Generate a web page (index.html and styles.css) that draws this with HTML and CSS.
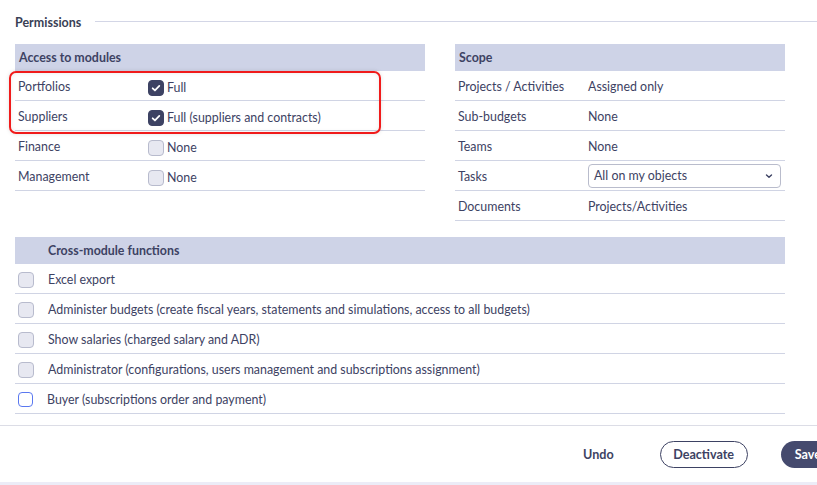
FILE: index.html
```html
<!DOCTYPE html>
<html>
<head>
<meta charset="utf-8">
<link rel="stylesheet" href="styles.css">
</head>
<body>
<div class="page">
  <div class="section-title"><span>Permissions</span><div class="rule"></div></div>
  <div class="top-grid">
    <div class="table modules">
      <div class="thead">Access to modules</div>
      <div class="row"><div class="label">Portfolios</div><div class="val"><span class="cb checked"><svg viewBox="0 0 16 16"><path d="M4.2 8.3l2.6 2.5 5-5.2" fill="none" stroke="#fff" stroke-width="2" stroke-linecap="round" stroke-linejoin="round"/></svg></span>Full</div></div>
      <div class="row"><div class="label">Suppliers</div><div class="val"><span class="cb checked"><svg viewBox="0 0 16 16"><path d="M4.2 8.3l2.6 2.5 5-5.2" fill="none" stroke="#fff" stroke-width="2" stroke-linecap="round" stroke-linejoin="round"/></svg></span>Full (suppliers and contracts)</div></div>
      <div class="row"><div class="label">Finance</div><div class="val"><span class="cb"></span>None</div></div>
      <div class="row"><div class="label">Management</div><div class="val"><span class="cb"></span>None</div></div>
      <div class="highlight"></div>
    </div>
    <div class="table scope">
      <div class="thead">Scope</div>
      <div class="row"><div class="label">Projects / Activities</div><div class="val">Assigned only</div></div>
      <div class="row"><div class="label">Sub-budgets</div><div class="val">None</div></div>
      <div class="row"><div class="label">Teams</div><div class="val">None</div></div>
      <div class="row"><div class="label">Tasks</div><div class="val"><div class="select"><span>All on my objects</span><svg viewBox="0 0 10 10"><path d="M2.5 4l2.5 2.3 2.5-2.3" fill="none" stroke="#3d4263" stroke-width="1.4" stroke-linecap="round" stroke-linejoin="round"/></svg></div></div></div>
      <div class="row"><div class="label">Documents</div><div class="val">Projects/Activities</div></div>
    </div>
  </div>
  <div class="table cross">
    <div class="thead">Cross-module functions</div>
    <div class="row"><span class="cb"></span>Excel export</div>
    <div class="row"><span class="cb"></span>Administer budgets (create fiscal years, statements and simulations, access to all budgets)</div>
    <div class="row"><span class="cb"></span>Show salaries (charged salary and ADR)</div>
    <div class="row"><span class="cb"></span>Administrator (configurations, users management and subscriptions assignment)</div>
    <div class="row"><span class="cb focus"></span>Buyer (subscriptions order and payment)</div>
  </div>
</div>
<div class="footer">
  <button class="btn link">Undo</button>
  <button class="btn outline">Deactivate</button>
  <button class="btn primary">Save</button>
</div>
<div class="bottom-band"></div>
</body>
</html>
```
FILE: styles.css
```css
html, body {
  margin: 0;
  padding: 0;
  overflow: hidden;
  background: #fff;
}
body {
  width: 817px;
  height: 485px;
  font-family: "Lato", "Liberation Sans", sans-serif;
  font-size: 12.4px;
  color: #3d4263;
}
.page {
  padding: 0 32px 0 15px;
}
.section-title {
  display: flex;
  align-items: center;
  height: 44px;
  gap: 14px;
  margin-right: -32px;
}
.section-title span {
  font-weight: 700;
  font-size: 12.5px;
  color: #3a3f55;
}
.section-title .rule {
  flex: 1;
  height: 1px;
  background: #d3d6e6;
  margin-top: -2px;
}
.top-grid {
  display: flex;
  gap: 30px;
  align-items: flex-start;
}
.table {
  position: relative;
}
.modules { width: 410px; }
.scope { width: 330px; }
.thead {
  height: 27px;
  background: #ced3e7;
  font-weight: 700;
  display: flex;
  align-items: center;
  padding-left: 4px;
  color: #3d4263;
}
.row {
  border-bottom: 1px solid #d0d4e4;
  display: flex;
  align-items: center;
  padding-left: 3px;
  padding-top: 2px;
  box-sizing: border-box;
  height: 30px;
}
.label {
  width: 130px;
  flex: none;
}
.val {
  display: flex;
  align-items: center;
  flex: 1;
  padding-top: 2px;
}
.scope .val { padding-top: 0; }
.cb {
  width: 14px;
  height: 14px;
  border: 1px solid #b8bbcd;
  background: #e7e8f1;
  border-radius: 4px;
  flex: none;
  margin-right: 3px;
  display: inline-flex;
}
.cb.checked {
  background: #3d4263;
  border-color: #3d4263;
}
.cb svg { width: 14px; height: 14px; }
.cb.focus {
  background: #fff;
  border: 1.5px solid #5a78f0;
  width: 13px;
  height: 13px;
}
.select {
  width: 193px;
  height: 24px;
  box-sizing: border-box;
  border: 1px solid #b9bccc;
  border-radius: 4px;
  display: flex;
  align-items: center;
  justify-content: space-between;
  padding: 0 6px 0 5px;
  margin-top: -2px;
}
.select svg { width: 10px; height: 10px; }
.highlight {
  position: absolute;
  left: -6px;
  top: 27px;
  width: 368px;
  height: 59px;
  border: 2px solid #f01b1b;
  border-radius: 7px;
  box-shadow: 0 0 4px rgba(0,0,0,0.12), inset 0 0 4px rgba(0,0,0,0.08);
  pointer-events: none;
}
.cross {
  margin-top: 16px;
  width: 770px;
}
.cross .thead { padding-left: 33px; }
.cross .row .cb {
  margin-right: 14px;
}
.footer {
  margin-top: 11px;
  border-top: 1px solid #dcdde6;
  height: 56px;
  display: flex;
  align-items: center;
  padding-left: 567px;
  gap: 30px;
  white-space: nowrap;
}
.btn {
  font-family: inherit;
  font-size: 12.6px;
  font-weight: 700;
  height: 27px;
  border-radius: 14px;
  background: none;
  border: none;
  color: #3d4263;
  padding: 0 16px;
  flex: none;
}
.btn.outline {
  border: 1.5px solid #3d4263;
  width: 88px;
  padding: 0;
}
.btn.primary {
  background: #454a6e;
  color: #fff;
  width: 72px;
  margin-left: 3px;
  padding: 0 14px;
  text-align: left;
}
.bottom-band {
  height: 3px;
  background: #ececf7;
}
```
